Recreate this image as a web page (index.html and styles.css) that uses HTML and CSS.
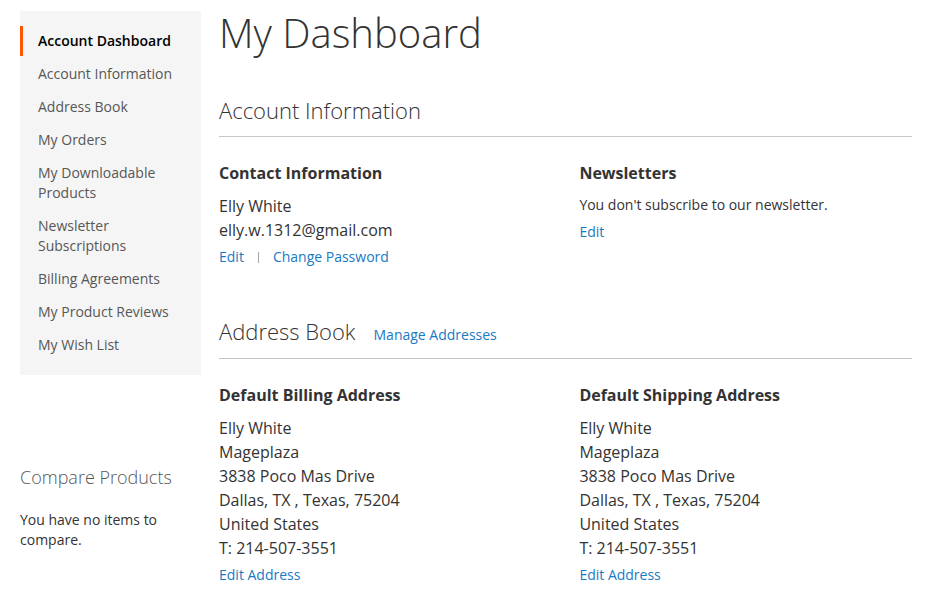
FILE: index.html
```
<!DOCTYPE html>
<html lang="en">
<head>
<meta charset="utf-8">
<title>My Dashboard</title>
<link rel="stylesheet" href="styles.css">
</head>
<body>
<div class="page">
  <aside class="sidebar">
    <nav class="account-nav">
      <ul class="nav-list">
        <li class="item current"><strong>Account Dashboard</strong></li>
        <li class="item"><a href="#">Account Information</a></li>
        <li class="item"><a href="#">Address Book</a></li>
        <li class="item"><a href="#">My Orders</a></li>
        <li class="item"><a href="#">My Downloadable Products</a></li>
        <li class="item"><a href="#">Newsletter Subscriptions</a></li>
        <li class="item"><a href="#">Billing Agreements</a></li>
        <li class="item"><a href="#">My Product Reviews</a></li>
        <li class="item"><a href="#">My Wish List</a></li>
      </ul>
    </nav>
    <div class="compare">
      <div class="compare-title">Compare Products</div>
      <p class="compare-empty">You have no items to compare.</p>
    </div>
  </aside>
  <main class="main">
    <h1 class="page-title">My Dashboard</h1>
    <section class="block">
      <div class="block-title"><strong>Account Information</strong></div>
      <div class="block-content">
        <div class="box">
          <strong class="box-title">Contact Information</strong>
          <div class="box-content">Elly White<br>elly.w.1312@gmail.com</div>
          <div class="box-actions"><a href="#">Edit</a><span class="sep"></span><a href="#">Change Password</a></div>
        </div>
        <div class="box">
          <strong class="box-title">Newsletters</strong>
          <p class="box-note">You don't subscribe to our newsletter.</p>
          <div class="box-actions note-actions"><a href="#">Edit</a></div>
        </div>
      </div>
    </section>
    <section class="block">
      <div class="block-title"><strong>Address Book</strong><a class="title-action" href="#">Manage Addresses</a></div>
      <div class="block-content">
        <div class="box">
          <strong class="box-title">Default Billing Address</strong>
          <address class="box-content">Elly White<br>Mageplaza<br>3838 Poco Mas Drive<br>Dallas, TX , Texas, 75204<br>United States<br>T: 214-507-3551</address>
          <div class="box-actions"><a href="#">Edit Address</a></div>
        </div>
        <div class="box">
          <strong class="box-title">Default Shipping Address</strong>
          <address class="box-content">Elly White<br>Mageplaza<br>3838 Poco Mas Drive<br>Dallas, TX , Texas, 75204<br>United States<br>T: 214-507-3551</address>
          <div class="box-actions"><a href="#">Edit Address</a></div>
        </div>
      </div>
    </section>
  </main>
</div>
</body>
</html>
```
FILE: styles.css
```
* { box-sizing: border-box; }
html, body { margin: 0; padding: 0; background: #fff; }
body {
  font-family: "Open Sans", "Noto Sans", sans-serif;
  font-size: 14px;
  line-height: 20px;
  color: #333;
}
a { color: #1979c3; text-decoration: none; }

.page {
  display: flex;
  align-items: flex-start;
  padding: 0 14px 0 20px;
}

.sidebar {
  width: 181px;
  flex: none;
  margin-top: 11px;
}
.account-nav {
  background: #f5f5f5;
  padding: 15px 0;
}
.nav-list { list-style: none; margin: 0; padding: 0; }
.item { margin-top: 3px; }
.item:first-child { margin-top: 0; }
.item a, .item strong {
  display: block;
  padding: 5px 18px 5px 15px;
  border-left: 3px solid transparent;
  color: #575757;
  font-weight: 400;
}
.item.current strong {
  border-left-color: #ff5501;
  color: #000;
  font-weight: 600;
}

.compare { margin-top: 91px; }
.compare-title {
  font-size: 18px;
  line-height: 22px;
  font-weight: 300;
  color: #575757;
}
.compare-empty { margin: 22px 0 0; color: #333; }

.main {
  flex: 1;
  margin-left: 18px;
  padding-top: 11px;
}
.page-title {
  margin: 0 0 42px;
  font-size: 40px;
  line-height: 44px;
  font-weight: 300;
  color: #333;
}
.block { margin-bottom: 51px; }
.block-title {
  display: flex;
  align-items: baseline;
  padding-bottom: 13px;
  border-bottom: 1px solid #c6c6c6;
  margin-bottom: 26px;
}
.block-title strong {
  font-size: 22px;
  line-height: 26px;
  font-weight: 300;
}
.title-action { margin-left: 18px; font-size: 14px; }
.block-content {
  display: flex;
  justify-content: space-between;
}
.box { width: 48%; }
.box-title {
  display: block;
  font-size: 16px;
  line-height: 20px;
  font-weight: 700;
  margin-bottom: 11px;
}
.box-content {
  font-size: 16px;
  line-height: 24px;
  font-style: normal;
}
.box-note { margin: 0; padding-top: 1px; }
.box-actions { margin-top: 5px; }
.note-actions { margin-top: 7px; }
.sep {
  display: inline-block;
  width: 1px;
  height: 11px;
  background: #a6a6a6;
  margin: 0 14px;
  vertical-align: -1px;
}
```
